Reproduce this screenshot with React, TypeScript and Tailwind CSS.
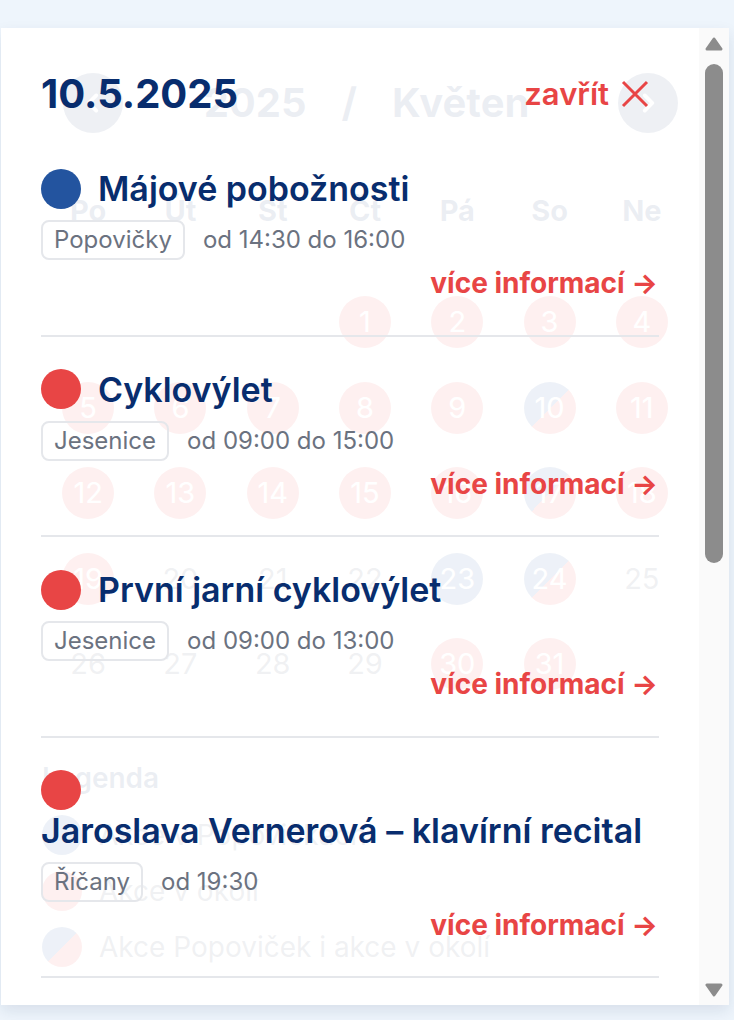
import React from 'react';

type Kind = 'pop' | 'okoli' | 'both' | 'none';

interface DayEvent {
  title: string;
  place: string;
  time: string;
  kind: 'pop' | 'okoli';
}

const EVENTS: DayEvent[] = [
  { title: 'Májové pobožnosti', place: 'Popovičky', time: 'od 14:30 do 16:00', kind: 'pop' },
  { title: 'Cyklovýlet', place: 'Jesenice', time: 'od 09:00 do 15:00', kind: 'okoli' },
  { title: 'První jarní cyklovýlet', place: 'Jesenice', time: 'od 09:00 do 13:00', kind: 'okoli' },
  { title: 'Jaroslava Vernerová – klavírní recital', place: 'Říčany', time: 'od 19:30', kind: 'okoli' },
  { title: 'Farmářské trhy', place: 'Říčany', time: 'od 08:00 do 12:00', kind: 'okoli' },
  { title: 'Den otevřených dveří', place: 'Jesenice', time: 'od 10:00 do 16:00', kind: 'okoli' },
  { title: 'Jarní koncert', place: 'Říčany', time: 'od 18:00', kind: 'okoli' },
  { title: 'Pohádkový les', place: 'Jesenice', time: 'od 13:00 do 17:00', kind: 'okoli' },
];

const WEEKDAYS = ['Po', 'Út', 'St', 'Čt', 'Pá', 'So', 'Ne'];

const DAY_KIND: Record<number, Kind> = {
  1: 'okoli', 2: 'okoli', 3: 'okoli', 4: 'okoli',
  5: 'okoli', 6: 'okoli', 7: 'okoli', 8: 'okoli', 9: 'okoli', 10: 'both', 11: 'okoli',
  12: 'okoli', 13: 'okoli', 14: 'okoli', 15: 'okoli', 16: 'okoli', 17: 'both', 18: 'okoli',
  19: 'okoli', 23: 'pop', 24: 'both',
  30: 'okoli', 31: 'okoli',
};

const DAY_CLASS: Record<Kind, string> = {
  okoli: 'bg-[#e84545] text-white',
  pop: 'bg-[#23549f] text-white',
  both: 'bg-[linear-gradient(135deg,#23549f_50%,#e84545_50%)] text-white',
  none: 'text-[#3f4d63]',
};

const DOT_CLASS = {
  pop: 'bg-[#23549f]',
  okoli: 'bg-[#e84545]',
};

function Chevron({ dir }: { dir: 'left' | 'right' }) {
  return (
    <svg width="26" height="26" viewBox="0 0 24 24" fill="none" stroke="white" strokeWidth="3.5" strokeLinecap="round" strokeLinejoin="round">
      {dir === 'left' ? <path d="M15 5l-7 7 7 7" /> : <path d="M9 5l7 7-7 7" />}
    </svg>
  );
}

function Calendar() {
  const cells: (number | null)[] = [null, null, null, ...Array.from({ length: 31 }, (_, i) => i + 1)];
  return (
    <div className="px-[41px] pt-[45px]">
      {/* month header */}
      <div className="flex items-center">
        <div className="ml-[21px] w-[60px] h-[60px] rounded-full bg-[#2c4676] flex items-center justify-center">
          <Chevron dir="left" />
        </div>
        <div className="flex-1 flex items-center justify-center gap-[35px] pr-[8px] text-[40px] font-bold text-[#0b2a63] leading-none">
          <span>2025</span>
          <span>/</span>
          <span>Květen</span>
        </div>
        <div className="mr-[10px] w-[60px] h-[60px] rounded-full bg-[#2c4676] flex items-center justify-center">
          <Chevron dir="right" />
        </div>
      </div>

      {/* weekdays */}
      <div className="grid grid-cols-7 mt-[60px] text-[29px] font-bold text-[#0b2a63] leading-[36px]">
        {WEEKDAYS.map((d) => <div key={d} className="text-center">{d}</div>)}
      </div>

      {/* days */}
      <div className="grid grid-cols-7 gap-y-[33.5px] mt-[67px]">
        {cells.map((d, i) => (
          <div key={i} className="flex justify-center">
            {d !== null && (
              <div className={`w-[52px] h-[52px] rounded-full flex items-center justify-center text-[29px] ${DAY_CLASS[DAY_KIND[d] ?? 'none']}`}>
                {d}
              </div>
            )}
          </div>
        ))}
      </div>

      {/* legend */}
      <div className="mt-[70px]">
        <p className="text-[28px] font-semibold text-[#0b2a63] leading-[36px]">Legenda</p>
        <div className="mt-[18px] flex flex-col gap-[14px] text-[28px] text-[#3f4d63]">
          <div className="flex items-center gap-[17px]">
            <span className="w-[40px] h-[40px] rounded-full bg-[#23549f]" />
            <span>Akce v Popovičkách</span>
          </div>
          <div className="flex items-center gap-[17px]">
            <span className="w-[40px] h-[40px] rounded-full bg-[#e84545]" />
            <span>Akce v okolí</span>
          </div>
          <div className="flex items-center gap-[17px]">
            <span className="w-[40px] h-[40px] rounded-full bg-[linear-gradient(135deg,#23549f_50%,#e84545_50%)]" />
            <span>Akce Popoviček i akce v okolí</span>
          </div>
        </div>
      </div>
    </div>
  );
}

function EventItem({ ev }: { ev: DayEvent }) {
  return (
    <div className="border-b-2 border-[#e5e7eb] pt-[32px] pb-[31.5px]">
      <div className="flex flex-wrap items-center gap-x-[17px]">
        <span className={`w-[40px] h-[40px] rounded-full shrink-0 ${DOT_CLASS[ev.kind]}`} />
        <h3 className="text-[34px] leading-[41px] font-semibold text-[#082d6e]">{ev.title}</h3>
      </div>
      <div className="mt-[11px] flex items-center gap-[18px] text-[24px] text-[#6b7280]">
        <span className="h-[40px] px-[11px] flex items-center border-2 border-[#e5e7eb] rounded-lg">{ev.place}</span>
        <span>{ev.time}</span>
      </div>
      <div className="mt-[3px] flex justify-end">
        <a className="text-[28px] leading-[40px] font-bold text-[#e84545] mr-[1px]">více informací →</a>
      </div>
    </div>
  );
}

function Arrow({ up }: { up?: boolean }) {
  return (
    <svg width="18" height="14" viewBox="0 0 18 14" fill="#8c8c8c" stroke="#8c8c8c" strokeWidth="3" strokeLinejoin="round">
      {up ? <path d="M9 2L16 12H2Z" /> : <path d="M2 2H16L9 12Z" />}
    </svg>
  );
}

export default function App() {
  return (
    <div className="min-h-[1020px] bg-[#eef5fc] pt-[28px] pl-[1px] [font-family:Inter,sans-serif]">
      <div className="relative w-[728px] h-[977px] bg-white overflow-hidden shadow-[0_6px_14px_rgba(15,40,80,0.10)]">
        <Calendar />

        {/* day detail overlay */}
        <div className="absolute inset-0 flex">
          <div className="flex-1 bg-white/[0.92] overflow-hidden">
            <div className="px-[40px] pt-[42px] pb-[40px]">
              <div className="flex items-center justify-between mb-[18px]">
                <h2 className="text-[40px] leading-[48px] font-bold text-[#082d6e]">10.5.2025</h2>
                <button className="flex items-center gap-[12px] mr-[10px] text-[31px] font-semibold text-[#e84545]">
                  zavřít
                  <svg width="28" height="28" viewBox="0 0 28 28" fill="none" stroke="#e84545" strokeWidth="3">
                    <path d="M2 2L26 26M26 2L2 26" />
                  </svg>
                </button>
              </div>
              {EVENTS.map((ev) => <EventItem key={ev.title} ev={ev} />)}
            </div>
          </div>

          {/* scrollbar */}
          <div className="w-[30px] bg-[#fafafa] flex flex-col items-center pt-[9px] pb-[8px]">
            <Arrow up />
            <div className="mt-[13px] w-[18px] h-[499px] rounded-full bg-[#8c8c8c]" />
            <div className="flex-1" />
            <Arrow />
          </div>
        </div>
      </div>
    </div>
  );
}
